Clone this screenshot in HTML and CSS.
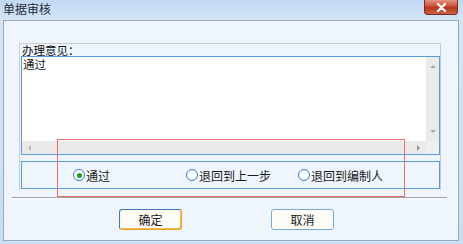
FILE: index.html
```html
<!DOCTYPE html>
<html lang="zh-CN">
<head>
    <meta charset="UTF-8">
    <title>单据审核</title>
    <link rel="stylesheet" href="styles.css">
</head>
<body>
    <div class="window">
        <div class="titlebar">
            <span class="title">单据审核</span>
            <div class="close-btn">
                <svg width="11" height="9" viewBox="0 0 11 9">
                    <path d="M2 1 L9 8 M9 1 L2 8" stroke="#fff" stroke-width="2.2" stroke-linecap="round"/>
                </svg>
            </div>
        </div>
        <div class="client">
            <div class="group">
                <div class="group-label">办理意见：</div>
                <div class="memo">
                    <div class="memo-body">
                        <div class="memo-text">通过</div>
                        <div class="vscroll">
                            <span class="arrow arrow-up"></span>
                            <span class="arrow arrow-down"></span>
                        </div>
                    </div>
                    <div class="hscroll">
                        <div class="hscroll-track">
                            <span class="arrow arrow-left"></span>
                            <span class="arrow arrow-right"></span>
                        </div>
                        <div class="corner"></div>
                    </div>
                </div>
                <div class="radio-box">
                    <label class="radio radio-pass"><span class="dot checked"></span>通过</label>
                    <label class="radio radio-prev"><span class="dot"></span>退回到上一步</label>
                    <label class="radio radio-author"><span class="dot"></span>退回到编制人</label>
                </div>
            </div>
            <div class="separator"></div>
            <div class="buttons">
                <button class="btn btn-default">确定</button>
                <button class="btn btn-cancel">取消</button>
            </div>
        </div>
        <div class="mark"></div>
    </div>
</body>
</html>
```

FILE: styles.css
```css
* {
    margin: 0;
    padding: 0;
    box-sizing: border-box;
}

body {
    width: 463px;
    height: 244px;
    overflow: hidden;
    font-family: "Noto Sans CJK SC", "Liberation Sans", sans-serif;
    font-size: 12px;
    color: #1a1a1a;
    background: #c7dcf3;
}

.window {
    position: relative;
    width: 463px;
    height: 244px;
    background: linear-gradient(to bottom, #c2d8f1 0%, #d3e4f6 20px, #cadff4 100%);
}

.titlebar {
    height: 20px;
    display: flex;
    justify-content: space-between;
    align-items: flex-start;
}

.title {
    padding: 2px 0 0 3px;
    font-size: 12px;
    line-height: 14px;
    color: #1e2a3a;
}

.close-btn {
    width: 34px;
    height: 15px;
    margin-right: 5px;
    border: 1px solid #7a2a22;
    border-top: none;
    border-radius: 0 0 4px 4px;
    background: linear-gradient(to bottom, #e29784 0%, #cc4c36 45%, #b43520 55%, #cf6248 100%);
    display: flex;
    justify-content: center;
    align-items: center;
}

.client {
    height: 221px;
    margin: 0 4px 0 3px;
    border: 1px solid #9aa8b8;
    background: #eef5fd;
    padding: 22px 0 0 0;
}

.group {
    width: 422px;
    height: 147px;
    margin-left: 15px;
    border-top: 1px solid #c9cdd2;
    border-right: 1px solid #c9cdd2;
    border-left: 1px solid #c9cdd2;
    padding-left: 1px;
}

.group-label {
    height: 12px;
    padding-top: 1px;
    line-height: 11px;
    font-size: 11.5px;
    padding-left: 1px;
    color: #111;
}

.memo {
    width: 419px;
    height: 99px;
    border: 1px solid #5b9bdc;
    background: #fff;
    display: flex;
    flex-direction: column;
}

.memo-body {
    flex: 1;
    display: flex;
}

.memo-text {
    flex: 1;
    padding: 2px 0 0 1px;
    line-height: 11px;
    font-size: 11.5px;
}

.vscroll {
    width: 13px;
    background: #eaeaea;
    display: flex;
    flex-direction: column;
    justify-content: space-between;
    align-items: center;
    padding: 8px 0 8px;
}

.hscroll {
    height: 13px;
    display: flex;
}

.hscroll-track {
    flex: 1;
    background: #eaeaea;
    display: flex;
    justify-content: space-between;
    align-items: center;
    padding: 0 6px 0 6px;
}

.corner {
    width: 13px;
    background: #f0f0f0;
}

.arrow {
    width: 0;
    height: 0;
    border: 3px solid transparent;
}

.arrow-up {
    border-bottom: 3px solid #a8a8a8;
    border-top: none;
}

.arrow-down {
    border-top: 3px solid #a8a8a8;
    border-bottom: none;
}

.arrow-left {
    border-right: 3px solid #b8b8b8;
    border-left: none;
}

.arrow-right {
    border-left: 3px solid #909090;
    border-right: none;
}

.radio-box {
    width: 419px;
    height: 28px;
    margin-top: 6px;
    border: 1px solid #5b9bdc;
    background: #eef5fd;
    display: flex;
    align-items: center;
}

.radio {
    display: flex;
    align-items: center;
    font-size: 12px;
    color: #1a1a1a;
}

.radio-pass {
    margin-left: 51px;
}

.radio-prev {
    margin-left: 76px;
}

.radio-author {
    margin-left: 27px;
}

.dot {
    width: 12px;
    height: 12px;
    border: 1px solid #3d7fbf;
    border-radius: 50%;
    background: radial-gradient(circle, #ffffff 0%, #f2f6fa 100%);
    margin-right: 1px;
    display: flex;
    justify-content: center;
    align-items: center;
}

.dot.checked::after {
    content: "";
    width: 5px;
    height: 5px;
    border-radius: 50%;
    background: #1aa31a;
}

.separator {
    width: 435px;
    height: 2px;
    margin: 7px 0 0 8px;
    border-top: 1px solid #a0a0a0;
    border-bottom: 1px solid #ffffff;
}

.buttons {
    display: flex;
    margin-top: 10px;
}

.btn {
    height: 21px;
    font-family: "Noto Sans CJK SC", "Liberation Sans", sans-serif;
    font-size: 12px;
    color: #1a1a1a;
    background: #fdfbf6;
    border-radius: 3px;
}

.btn-default {
    width: 63px;
    margin-left: 115px;
    border: 1px solid #3c7cb8;
    box-shadow: inset -1px -1px 0 #f5b945, inset 1px 1px 0 #fff6df;
    border-bottom-color: #e5a532;
    border-right-color: #e5a532;
}

.btn-cancel {
    width: 63px;
    margin-left: 89px;
    border: 1px solid #7aa8d8;
}

.mark {
    position: absolute;
    left: 57px;
    top: 139px;
    width: 348px;
    height: 58px;
    border: 1px solid #ec6c6c;
    pointer-events: none;
}
```
